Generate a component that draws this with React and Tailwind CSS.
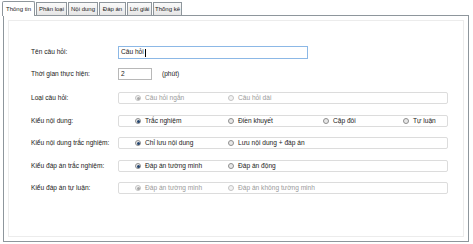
import React from 'react';

const tabs = ['Thông tin', 'Phân loại', 'Nội dung', 'Đáp án', 'Lời giải', 'Thống kê'];
const tabWidths = ['w-[33px]', 'w-[31px]', 'w-[30px]', 'w-[27px]', 'w-[25px]', 'w-[29px]'];

const Radio = ({ checked, disabled }) => (
  <span
    className={
      'w-[6px] h-[6px] rounded-full border flex items-center justify-center shrink-0 ' +
      (disabled ? 'border-[#c4c4c4] bg-[#f2f2f2]' : 'border-[#8f8f8f] bg-[#e8e8e8]')
    }
  >
    {checked && (
      <span className={'w-[3px] h-[3px] rounded-full ' + (disabled ? 'bg-[#a8a8a8]' : 'bg-[#23456f]')} />
    )}
  </span>
);

const Option = ({ label, checked, disabled, width }) => (
  <div className={'flex items-center gap-[4px] ' + width}>
    <Radio checked={checked} disabled={disabled} />
    <span className={disabled ? 'text-[#9a9a9a]' : 'text-[#1a1a1a]'}>{label}</span>
  </div>
);

const Row = ({ label, children, top }) => (
  <div className={'flex items-center h-[12px] ' + top}>
    <div className="w-[87px]">{label}</div>
    <div className="w-[330px] h-[12px] border border-[#dcdcdc] rounded-[2px] flex items-center pl-[16px]">
      {children}
    </div>
  </div>
);

const App = () => {
  return (
    <div className="w-[473px] h-[244px] bg-white text-[6.6px] text-[#1a1a1a] font-['Liberation_Sans',Arial,sans-serif] leading-none">
      <div className="flex items-end h-[15px] pl-[2px] text-[6px]">
        {tabs.map((t, i) => (
          <div
            key={t}
            className={
              'flex items-center justify-center whitespace-nowrap border border-b-0 border-[#8e969c] ' +
              tabWidths[i] +
              (i === 0
                ? ' h-[15px] bg-white relative z-10 mb-[-1px] rounded-t-[2px]'
                : ' h-[13px] bg-[linear-gradient(#fafafa,#e6e6e6)] ml-[1px]')
            }
          >
            {t}
          </div>
        ))}
      </div>
      <div className="ml-[3px] w-[466px] h-[227px] border border-[#8e969c] bg-white p-[4px]">
        <div className="h-full border border-[#ececec] pl-[22px] pt-[25px]">
          <div className="flex items-center h-[13px]">
            <div className="w-[87px]">Tên câu hỏi:</div>
            <div className="w-[190px] h-[13px] border border-[#8cb8e6] flex items-center pl-[2px]">
              Câu hỏi<span className="w-[1px] h-[8px] bg-black ml-[1px]" />
            </div>
          </div>
          <div className="flex items-center h-[12px] mt-[9px]">
            <div className="w-[87px]">Thời gian thực hiện:</div>
            <div className="w-[34px] h-[12px] border border-[#b8b8b8] flex items-center pl-[2px]">2</div>
            <div className="ml-[10px]">(phút)</div>
          </div>
          <Row label="Loại câu hỏi:" top="mt-[12px]">
            <Option label="Câu hỏi ngắn" checked disabled width="w-[93px]" />
            <Option label="Câu hỏi dài" disabled width="w-[95px]" />
          </Row>
          <Row label="Kiểu nội dung:" top="mt-[11px]">
            <Option label="Trắc nghiệm" checked width="w-[93px]" />
            <Option label="Điền khuyết" width="w-[95px]" />
            <Option label="Cặp đôi" width="w-[80px]" />
            <Option label="Tự luận" width="w-[40px]" />
          </Row>
          <Row label="Kiểu nội dung trắc nghiệm:" top="mt-[10px]">
            <Option label="Chỉ lưu nội dung" checked width="w-[93px]" />
            <Option label="Lưu nội dung + đáp án" width="w-[120px]" />
          </Row>
          <Row label="Kiểu đáp án trắc nghiệm:" top="mt-[11px]">
            <Option label="Đáp án tường minh" checked width="w-[93px]" />
            <Option label="Đáp án động" width="w-[95px]" />
          </Row>
          <Row label="Kiểu đáp án tự luận:" top="mt-[10px]">
            <Option label="Đáp án tường minh" checked disabled width="w-[93px]" />
            <Option label="Đáp án không tường minh" disabled width="w-[120px]" />
          </Row>
        </div>
      </div>
    </div>
  );
};

export default App;
